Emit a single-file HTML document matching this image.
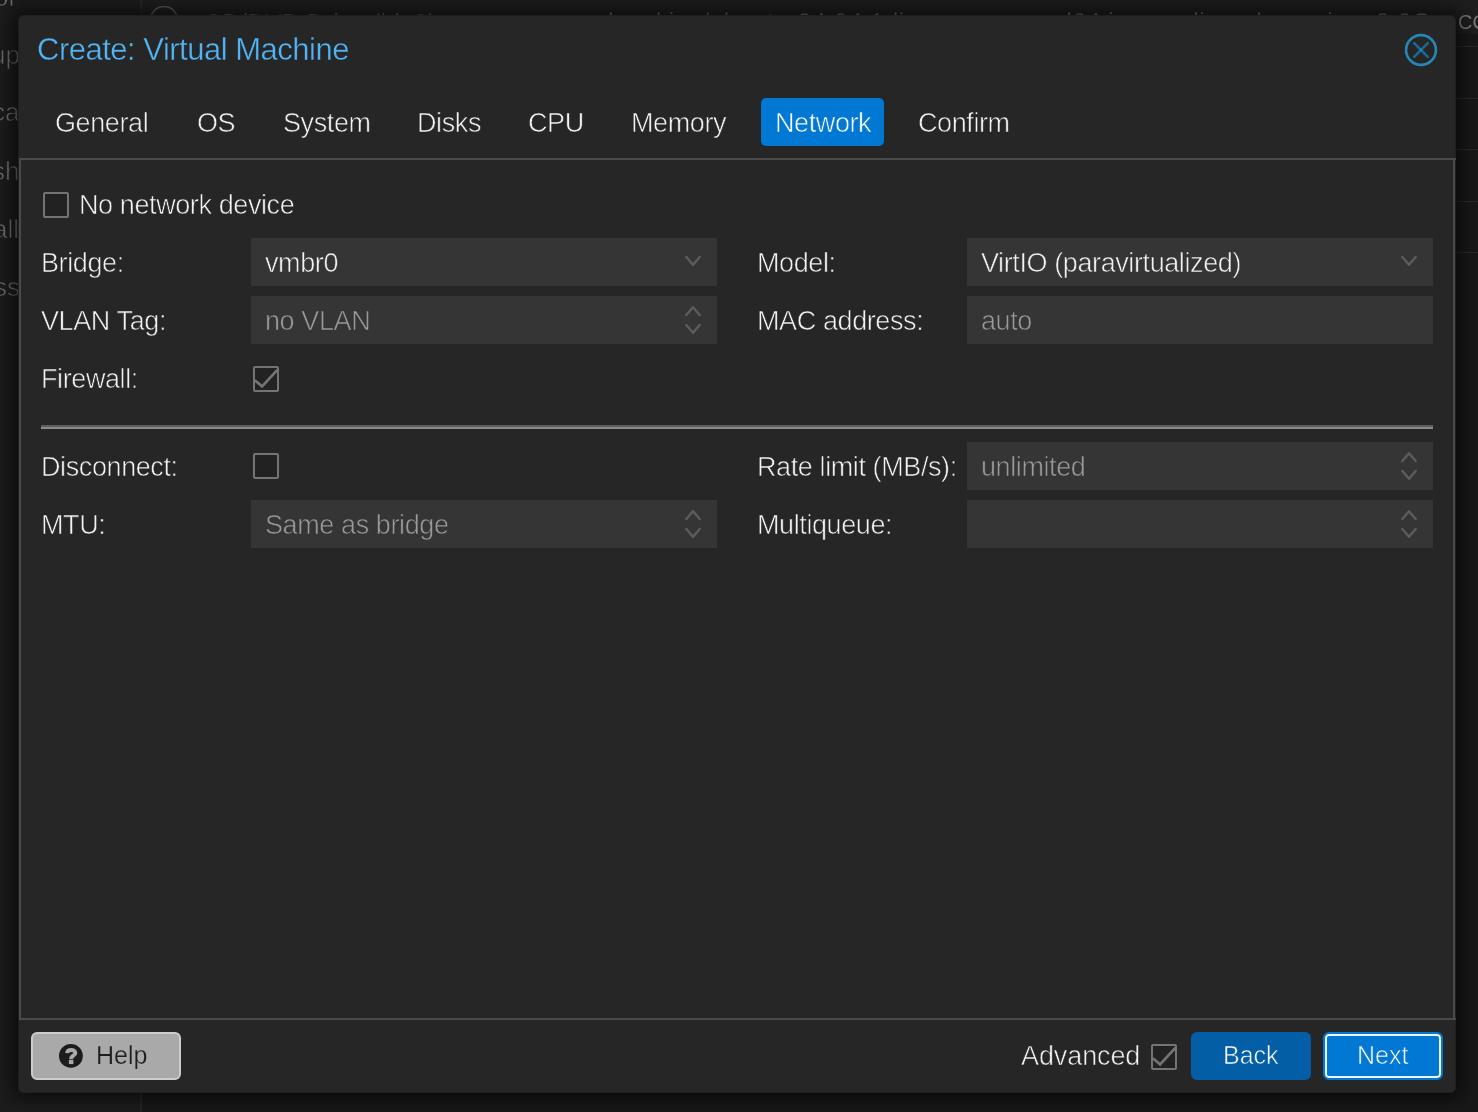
<!DOCTYPE html>
<html>
<head>
<meta charset="utf-8">
<style>
*{box-sizing:border-box;margin:0;padding:0}
html,body{width:1478px;height:1112px;overflow:hidden;background:#1c1c1c;font-family:"Liberation Sans",sans-serif;-webkit-font-smoothing:antialiased}
.a{position:absolute;white-space:nowrap}
.t{position:absolute;white-space:nowrap;font-size:27px;letter-spacing:-0.4px;line-height:30px;color:#f2f2f2;-webkit-text-stroke:0.6px #262626}
.fv{-webkit-text-stroke-color:#353535}
.bgt{position:absolute;white-space:nowrap;font-size:26px;line-height:30px;color:#6e6e6e;-webkit-text-stroke:0.6px #1a1a1a}
#dlg{position:absolute;left:18px;top:15px;width:1438px;height:1078px;background:#262626;border:1px solid #1f1f1f;border-radius:5px;box-shadow:0 0 18px 6px rgba(0,0,0,0.6);overflow:hidden}
.f{position:absolute;height:48px;background:#353535}
.cb{position:absolute;width:26px;height:26px;border:2.5px solid #747474;background:#222;border-radius:2px}
.chev{position:absolute;width:16px;height:10px}
</style>
</head>
<body><div style="position:absolute;left:0;top:0;width:1478px;height:1112px;will-change:transform">
<!-- background UI -->
<div class="a" style="left:0;top:0;width:1478px;height:1112px;background:#1c1c1c"></div>
<div class="a" style="left:142px;top:0;width:1336px;height:1112px;background:#181818"></div>
<div class="a" style="left:142px;top:0;width:1336px;height:34px;background:#1e1e1e"></div>
<div class="a" style="left:140px;top:0;width:2px;height:1112px;background:#242424"></div>
<div class="a" style="left:142px;top:46px;width:1336px;height:1px;background:#2a2a2a"></div>
<div class="a" style="left:142px;top:98px;width:1336px;height:1px;background:#2a2a2a"></div>
<div class="a" style="left:142px;top:149px;width:1336px;height:1px;background:#2a2a2a"></div>
<div class="a" style="left:142px;top:201px;width:1336px;height:1px;background:#2a2a2a"></div>
<div class="a" style="left:142px;top:252px;width:1336px;height:1px;background:#2a2a2a"></div>
<div class="bgt" style="left:-6px;top:-18px">or</div>
<div class="bgt" style="left:-9px;top:40px">up</div>
<div class="bgt" style="left:-8px;top:97px">ca</div>
<div class="bgt" style="left:-8px;top:156px">sh</div>
<div class="bgt" style="left:-7px;top:214px">all</div>
<div class="bgt" style="left:-6px;top:272px">ss</div>
<svg class="a" style="left:148px;top:4px" width="32" height="32" viewBox="0 0 32 32"><circle cx="16" cy="16" r="13.5" fill="none" stroke="#555" stroke-width="1.6"/></svg>
<div class="bgt" style="left:204px;top:8px;font-size:25px">CD/DVD Drive (ide2)</div>
<div class="bgt" style="left:608px;top:7px">local:iso/ubuntu-24.04.1-live-server-amd64.iso,media=cdrom,size=2.6G</div>
<div class="a" style="left:1458px;top:10px;font-size:20px;line-height:24px;color:#7a7a7a">CO</div>
<div id="dlg">
</div>
<!-- title -->
<div class="a" style="left:37px;top:33px;font-size:31px;letter-spacing:-0.5px;line-height:34px;color:#52b4f5;-webkit-text-stroke:0.4px #262626">Create: Virtual Machine</div>
<svg class="a" style="left:1403px;top:31.6px" width="36" height="36" viewBox="0 0 36 36"><defs><filter id="bl" x="-20%" y="-20%" width="140%" height="140%"><feGaussianBlur stdDeviation="0.7"/></filter></defs><g filter="url(#bl)"><circle cx="18" cy="18" r="14.9" fill="none" stroke="#2886b6" stroke-width="2.6"/><path d="M11.2 11.2L24.8 24.8M24.8 11.2L11.2 24.8" stroke="#1a6892" stroke-width="2.5" stroke-linecap="round"/><circle cx="18" cy="18" r="1.6" fill="#1f80b3"/></g></svg>
<!-- tabs -->
<div class="a" style="left:761px;top:98px;width:123px;height:48px;background:#0078d4;border-radius:5px"></div>
<div class="t" style="left:55px;top:108px">General</div>
<div class="t" style="left:197px;top:108px">OS</div>
<div class="t" style="left:283px;top:108px">System</div>
<div class="t" style="left:417px;top:108px">Disks</div>
<div class="t" style="left:528px;top:108px">CPU</div>
<div class="t" style="left:631px;top:108px">Memory</div>
<div class="t" style="left:775px;top:108px;color:#fff;-webkit-text-stroke-color:#0078d4">Network</div>
<div class="t" style="left:918px;top:108px">Confirm</div>
<!-- panel borders -->
<div class="a" style="left:19px;top:158px;width:1437px;height:2px;background:#4a4a4a"></div>
<div class="a" style="left:19px;top:158px;width:2px;height:862px;background:#4a4a4a"></div>
<div class="a" style="left:1453px;top:158px;width:2px;height:862px;background:#4a4a4a"></div>
<div class="a" style="left:19px;top:1018px;width:1437px;height:2px;background:#4a4a4a"></div>
<!-- no network device -->
<div class="cb" style="left:43px;top:192px"></div>
<div class="t" style="left:79px;top:190px">No network device</div>
<!-- row labels -->
<div class="t" style="left:41px;top:248px">Bridge:</div>
<div class="t" style="left:41px;top:306px">VLAN Tag:</div>
<div class="t" style="left:41px;top:364px">Firewall:</div>
<div class="t" style="left:757px;top:248px">Model:</div>
<div class="t" style="left:757px;top:306px">MAC address:</div>
<!-- fields -->
<div class="f" style="left:251px;top:238px;width:466px"></div>
<div class="f" style="left:251px;top:296px;width:466px"></div>
<div class="f" style="left:967px;top:238px;width:466px"></div>
<div class="f" style="left:967px;top:296px;width:466px"></div>
<div class="t fv" style="left:265px;top:248px">vmbr0</div>
<div class="t fv" style="left:265px;top:306px;color:#999">no VLAN</div>
<div class="t fv" style="left:981px;top:248px">VirtIO (paravirtualized)</div>
<div class="t fv" style="left:981px;top:306px;color:#999">auto</div>
<svg class="a" style="left:683px;top:254px" width="20" height="14" viewBox="0 0 20 14"><path d="M3.3 3L10 10.7L16.7 3" fill="none" stroke="#5c5c5c" stroke-width="2.5" stroke-linecap="round" stroke-linejoin="round"/></svg>
<svg class="a" style="left:1399px;top:254px" width="20" height="14" viewBox="0 0 20 14"><path d="M3.3 3L10 10.7L16.7 3" fill="none" stroke="#5c5c5c" stroke-width="2.5" stroke-linecap="round" stroke-linejoin="round"/></svg>
<svg class="a" style="left:683px;top:304px" width="20" height="14" viewBox="0 0 20 14"><path d="M3.3 11L10 3.3L16.7 11" fill="none" stroke="#5c5c5c" stroke-width="2.5" stroke-linecap="round" stroke-linejoin="round"/></svg>
<svg class="a" style="left:683px;top:322px" width="20" height="14" viewBox="0 0 20 14"><path d="M3.3 3L10 10.7L16.7 3" fill="none" stroke="#5c5c5c" stroke-width="2.5" stroke-linecap="round" stroke-linejoin="round"/></svg>
<!-- firewall checkbox -->
<div class="cb" style="left:253px;top:366px"></div>
<svg class="a" style="left:253px;top:366px" width="26" height="26" viewBox="0 0 26 26"><path d="M1.8 14.2L9.1 20.4L24.6 3.6" fill="none" stroke="#747474" stroke-width="2.7"/></svg>
<!-- separator -->
<div class="a" style="left:41px;top:425px;width:1392px;height:2px;background:#5c5c5c"></div>
<div class="a" style="left:41px;top:427px;width:1392px;height:2px;background:#8a8a8a"></div>
<!-- lower rows -->
<div class="t" style="left:41px;top:452px">Disconnect:</div>
<div class="t" style="left:41px;top:510px">MTU:</div>
<div class="t" style="left:757px;top:452px">Rate limit (MB/s):</div>
<div class="t" style="left:757px;top:510px">Multiqueue:</div>
<div class="cb" style="left:253px;top:453px"></div>
<div class="f" style="left:251px;top:500px;width:466px"></div>
<div class="f" style="left:967px;top:442px;width:466px"></div>
<div class="f" style="left:967px;top:500px;width:466px"></div>
<div class="t fv" style="left:265px;top:510px;color:#999">Same as bridge</div>
<div class="t fv" style="left:981px;top:452px;color:#999">unlimited</div>
<svg class="a" style="left:683px;top:508px" width="20" height="14" viewBox="0 0 20 14"><path d="M3.3 11L10 3.3L16.7 11" fill="none" stroke="#5c5c5c" stroke-width="2.5" stroke-linecap="round" stroke-linejoin="round"/></svg>
<svg class="a" style="left:683px;top:526px" width="20" height="14" viewBox="0 0 20 14"><path d="M3.3 3L10 10.7L16.7 3" fill="none" stroke="#5c5c5c" stroke-width="2.5" stroke-linecap="round" stroke-linejoin="round"/></svg>
<svg class="a" style="left:1399px;top:450px" width="20" height="14" viewBox="0 0 20 14"><path d="M3.3 11L10 3.3L16.7 11" fill="none" stroke="#5c5c5c" stroke-width="2.5" stroke-linecap="round" stroke-linejoin="round"/></svg>
<svg class="a" style="left:1399px;top:468px" width="20" height="14" viewBox="0 0 20 14"><path d="M3.3 3L10 10.7L16.7 3" fill="none" stroke="#5c5c5c" stroke-width="2.5" stroke-linecap="round" stroke-linejoin="round"/></svg>
<svg class="a" style="left:1399px;top:508px" width="20" height="14" viewBox="0 0 20 14"><path d="M3.3 11L10 3.3L16.7 11" fill="none" stroke="#5c5c5c" stroke-width="2.5" stroke-linecap="round" stroke-linejoin="round"/></svg>
<svg class="a" style="left:1399px;top:526px" width="20" height="14" viewBox="0 0 20 14"><path d="M3.3 3L10 10.7L16.7 3" fill="none" stroke="#5c5c5c" stroke-width="2.5" stroke-linecap="round" stroke-linejoin="round"/></svg>
<!-- footer -->
<div class="a" style="left:31px;top:1032px;width:150px;height:48px;background:#a9a9a9;border:2px solid #cdcdcd;border-radius:6px"></div>
<svg class="a" style="left:58.8px;top:1043.9px" width="24" height="24" viewBox="0 0 24 24"><circle cx="11.9" cy="11.9" r="11.9" fill="#1c1c1c"/><path d="M8.1 9.2C8.3 6.9 9.9 5.9 12.2 5.9C14.6 5.9 16.3 7.2 16.3 9.2C16.3 11.4 12.15 11.9 12.15 14.2V15.2" fill="none" stroke="#a9a9a9" stroke-width="4"/><rect x="9.9" y="16" width="4.5" height="4.1" fill="#a9a9a9"/></svg>
<div class="t" style="left:96px;top:1041px;font-size:25px;letter-spacing:0;line-height:28px;color:#1e1e1e;-webkit-text-stroke:0.25px #a9a9a9">Help</div>
<div class="t" style="left:1021px;top:1041px;letter-spacing:-0.1px">Advanced</div>
<div class="cb" style="left:1151px;top:1044px"></div>
<svg class="a" style="left:1151px;top:1044px" width="26" height="26" viewBox="0 0 26 26"><path d="M1.8 14.2L9.1 20.4L24.6 3.6" fill="none" stroke="#747474" stroke-width="2.7"/></svg>
<div class="a" style="left:1191px;top:1032px;width:120px;height:48px;background:#035ea6;border-radius:6px"></div>
<div class="t" style="left:1223px;top:1041px;font-size:25px;letter-spacing:0;line-height:28px;color:#fff;-webkit-text-stroke-color:#035ea6">Back</div>
<div class="a" style="left:1323px;top:1032px;width:120px;height:48px;background:#0078d4;border:2px solid #0078d4;border-radius:6px;box-shadow:inset 0 0 0 2px #f0f4f8"></div>
<div class="t" style="left:1357px;top:1041px;font-size:25px;letter-spacing:0;line-height:28px;color:#fff;-webkit-text-stroke-color:#0078d4">Next</div>

</div></body>
</html>
